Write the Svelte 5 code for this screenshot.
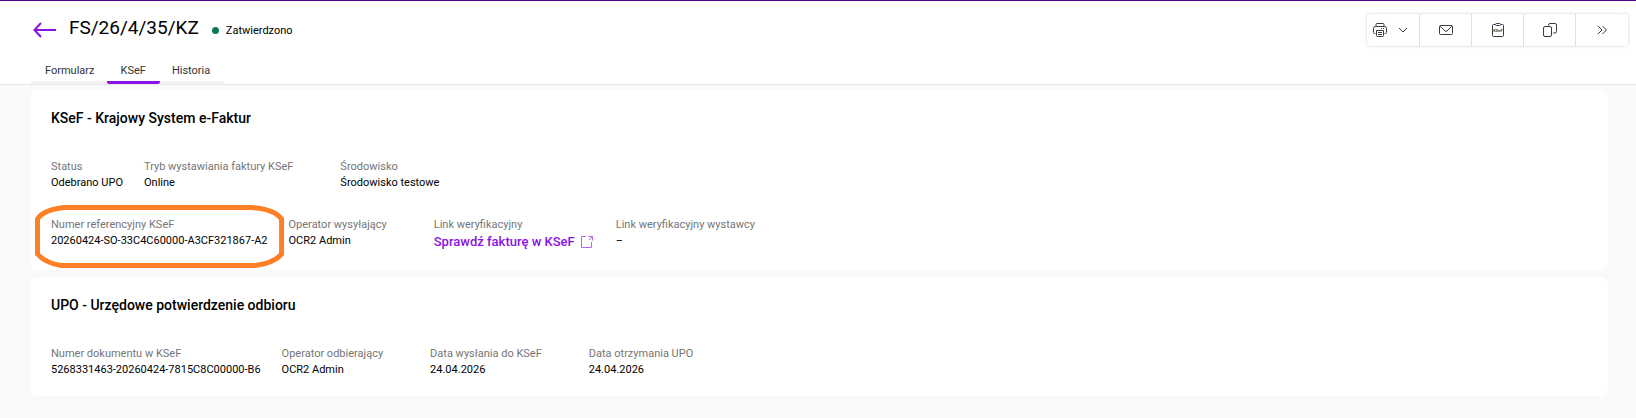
<script>
	let activeTab = $state('KSeF');

	const tabs = ['Formularz', 'KSeF', 'Historia'];

	const sections = [
		{
			title: 'KSeF - Krajowy System e-Faktur',
			rows: [
				[
					{ label: 'Status', value: 'Odebrano UPO' },
					{ label: 'Tryb wystawiania faktury KSeF', value: 'Online' },
					{ label: 'Środowisko', value: 'Środowisko testowe' }
				],
				[
					{
						label: 'Numer referencyjny KSeF',
						value: '20260424-SO-33C4C60000-A3CF321867-A2',
						marked: true
					},
					{ label: 'Operator wysyłający', value: 'OCR2 Admin' },
					{ label: 'Link weryfikacyjny', value: 'Sprawdź fakturę w KSeF', link: true },
					{ label: 'Link weryfikacyjny wystawcy', value: '–' }
				]
			]
		},
		{
			title: 'UPO - Urzędowe potwierdzenie odbioru',
			rows: [
				[
					{ label: 'Numer dokumentu w KSeF', value: '5268331463-20260424-7815C8C00000-B6' },
					{ label: 'Operator odbierający', value: 'OCR2 Admin' },
					{ label: 'Data wysłania do KSeF', value: '24.04.2026' },
					{ label: 'Data otrzymania UPO', value: '24.04.2026' }
				]
			]
		}
	];
</script>

<div class="page">
	<header>
		<div class="top">
			<button class="back" aria-label="Wstecz">
				<svg width="24" height="16" viewBox="0 0 24 16">
					<path d="M23 8H2M8 1L1.500 8L8 15" />
				</svg>
			</button>
			<h1>FS/26/4/35/KZ</h1>
			<span class="status"><i class="dot"></i>Zatwierdzono</span>

			<div class="toolbar">
				<button class="print" aria-label="Drukuj">
					<svg width="16" height="16" viewBox="0 0 16 16">
						<path d="M4 4.500V2.500Q4 1.500 5 1.500H11Q12 1.500 12 2.500V4.500" />
						<path d="M3.500 11.500H2.500Q1.500 11.500 1.500 10.500V6.500Q1.500 4.500 3.500 4.500H12.500Q14.500 4.500 14.500 6.500V10.500Q14.500 11.500 13.500 11.500H12.500" />
						<path d="M4.500 8.500H11.500V13.500Q11.500 14.500 10.500 14.500H5.500Q4.500 14.500 4.500 13.500ZM6 10.500H10M6 12.500H10M9 6.500H10M11 6.500H12" />
					</svg>
					<svg width="10" height="10" viewBox="0 0 10 10">
						<path d="M1 3L5 7L9 3" />
					</svg>
				</button>
				<button aria-label="Wyślij e-mail">
					<svg width="16" height="16" viewBox="0 0 16 16">
						<rect x="1.500" y="3.500" width="13" height="9" rx="1" />
						<path d="M2 4L7 9Q8 9.800 9 9L14 4" />
					</svg>
				</button>
				<button aria-label="KSeF">
					<svg width="16" height="16" viewBox="0 0 16 16">
						<path d="M5 2.500H3.500Q2.500 2.500 2.500 3.500V13.500Q2.500 14.500 3.500 14.500H12.500Q13.500 14.500 13.500 13.500V3.500Q13.500 2.500 12.500 2.500H11" />
						<rect x="5.500" y="1.500" width="5" height="2" rx="1" />
						<text x="8" y="10" text-anchor="middle">KSeF</text>
					</svg>
				</button>
				<button aria-label="Kopiuj">
					<svg width="16" height="16" viewBox="0 0 16 16">
						<rect x="1.500" y="4.500" width="8" height="10" rx="1.500" />
						<path d="M6.500 3.500V3Q6.500 1.500 8 1.500H13Q14.500 1.500 14.500 3V9.500Q14.500 11 13 11H11" />
					</svg>
				</button>
				<button aria-label="Więcej">
					<svg width="16" height="16" viewBox="0 0 16 16">
						<path d="M4 4L8 8L4 12M8.500 4L12.500 8L8.500 12" />
					</svg>
				</button>
			</div>
		</div>

		<nav>
			{#each tabs as tab}
				<button class:active={tab === activeTab} onclick={() => (activeTab = tab)}>{tab}</button>
			{/each}
		</nav>
	</header>

	<main>
		{#each sections as section}
			<section>
				<h2>{section.title}</h2>
				{#each section.rows as row}
					<dl>
						{#each row as item}
							<div class="item">
								<dt>{item.label}</dt>
								{#if item.link}
									<dd>
										<a href="#ksef">
											{item.value}
											<svg width="12" height="12" viewBox="0 0 12 12">
												<path d="M5 0.500H0.500V11.500H10.500V6M7.500 0.500H11.500V4.500M11.500 0.500L8 4" />
											</svg>
										</a>
									</dd>
								{:else}
									<dd>{item.value}</dd>
								{/if}
								{#if item.marked}
									<svg class="marker" viewBox="0 0 250 63" preserveAspectRatio="none">
										<path d="M29 2.500H217Q240 4 247 14V49Q240 58 220 60.500H26Q10 58 2.500 49V14Q8 5 29 2.500Z" />
									</svg>
								{/if}
							</div>
						{/each}
					</dl>
				{/each}
			</section>
		{/each}
	</main>
</div>

<style>
	:global(body) {
		margin: 0;
		background: #f8f9fb;
	}

	.page {
		font-family: Roboto, 'Liberation Sans', sans-serif;
		font-size: 11px;
		line-height: 16px;
		color: #000;
	}

	button {
		padding: 0;
		border: 0;
		background: none;
		font: inherit;
		color: inherit;
		cursor: pointer;
	}

	svg {
		display: block;
		fill: none;
		stroke: #3c3c3c;
	}

	/* Header */
	header {
		border-top: 1px solid #4b0082;
		border-bottom: 1px solid #e8e8e8;
		background: #fff;
	}

	.top {
		display: flex;
		align-items: center;
		height: 57px;
		padding: 0 8px 0 33px;
	}

	.back svg {
		stroke: #8a10e6;
		stroke-width: 2;
	}

	h1 {
		margin: 0 13px 0 12px;
		padding-bottom: 3px;
		font-size: 19px;
		line-height: 24px;
		font-weight: 400;
	}

	.status {
		display: flex;
		align-items: center;
		gap: 7px;
		padding-top: 2px;
	}

	.dot {
		width: 7px;
		height: 7px;
		border-radius: 50%;
		background: #0d7a55;
	}

	.toolbar {
		display: flex;
		margin-left: auto;
		border-radius: 3px;
		box-shadow: 0 0 3px rgba(0, 0, 0, 0.2);
	}

	.toolbar button {
		display: flex;
		align-items: center;
		justify-content: center;
		box-sizing: border-box;
		width: 52px;
		height: 32px;
		border-right: 1px solid #e0dcf8;
	}

	.toolbar button:last-child {
		border-right: 0;
	}

	.toolbar .print {
		justify-content: flex-start;
		gap: 10px;
		width: 53px;
		padding-left: 5px;
	}

	.toolbar text {
		fill: #3c3c3c;
		stroke: none;
		font-size: 4px;
		font-weight: 700;
	}

	nav {
		display: flex;
		width: max-content;
		height: 26px;
		margin-left: 31px;
	}

	nav button {
		padding: 2px 12px 0;
		border-bottom: 3px solid #f2f2f2;
		color: #333;
	}

	nav button:first-child {
		padding-left: 14px;
	}

	nav button:last-child {
		padding-right: 14px;
	}

	nav .active {
		padding: 2px 14px 0;
		border-color: #8a10e6;
		border-radius: 2px;
	}

	/* Cards */
	main {
		display: flex;
		flex-direction: column;
		gap: 7px;
		padding: 5px 28px 22px 31px;
	}

	section {
		padding: 18px 20px;
		border-radius: 6px;
		background: #fff;
	}

	h2 {
		margin: 0 0 31px;
		font-size: 14px;
		line-height: 20px;
		font-weight: 500;
	}

	dl {
		display: flex;
		margin: 0;
	}

	dl + dl {
		margin-top: 26px;
	}

	.item {
		position: relative;
		margin-right: 21px;
	}

	dt {
		padding-right: 26px;
		color: #757575;
	}

	dd {
		margin: 0;
	}

	a {
		display: flex;
		align-items: center;
		gap: 6px;
		padding: 0 2px 2px 0;
		font-size: 13px;
		line-height: 17px;
		font-weight: 500;
		color: #8a10e6;
		text-decoration: none;
	}

	a svg {
		stroke: #b266f0;
	}

	/* Hand-drawn frame around the reference number */
	.marker {
		position: absolute;
		top: -12px;
		left: -16px;
		width: calc(100% + 33px);
		height: 63px;
		pointer-events: none;
	}

	.marker path {
		stroke: #ff7f27;
		stroke-width: 5;
	}
</style>
